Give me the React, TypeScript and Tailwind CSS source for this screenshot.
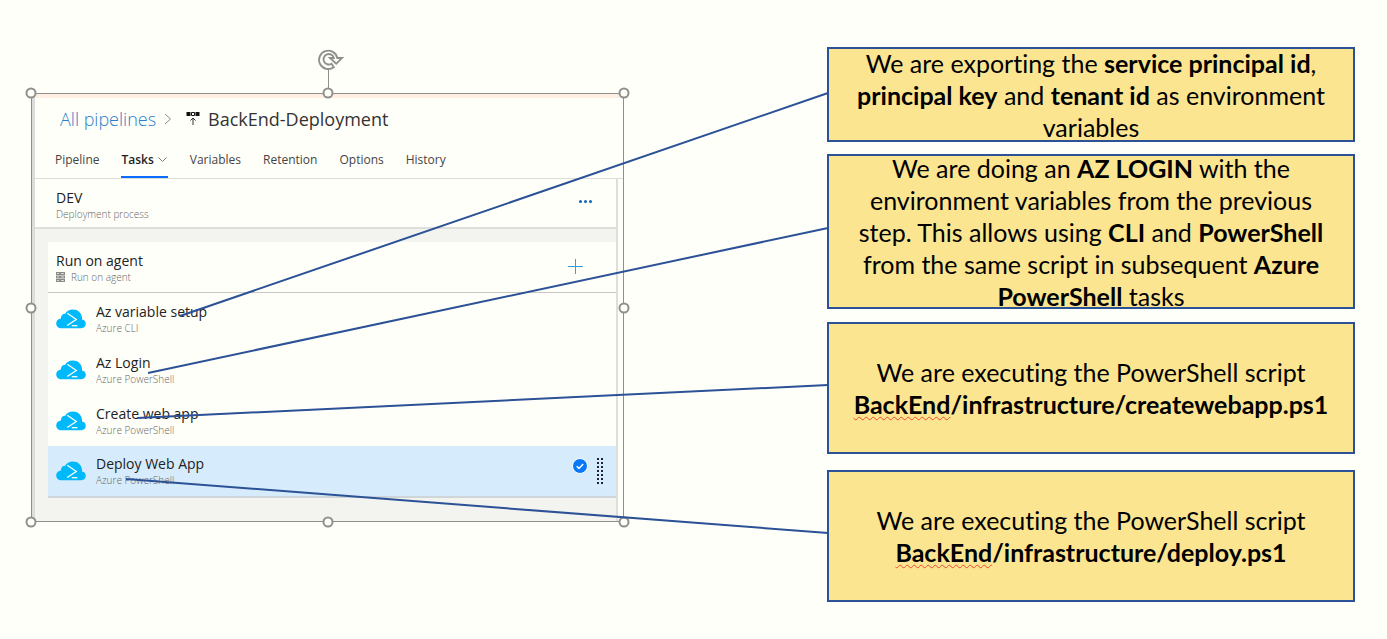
import type { ReactNode } from 'react';

const PAPER = 'bg-[#fffffa]';

function CloudShellIcon() {
  return (
    <svg viewBox="0 0 30 20" className="h-5 w-[30px] shrink-0" aria-hidden="true">
      <path
        d="M5.500 19.200C2.300 19.200.2 17 .2 14.400c0-2.600 2.100-4.600 4.700-4.900C4.900 6.500 6.500 4.800 9.200 4.700C10.300 2.300 13.300.4 16.900.4c5 0 8.600 3.300 9.100 8 .1.700.1 1.200 0 2.100 2.300.2 3.800 1.900 3.800 4.300 0 2.500-1.900 4.400-4.400 4.400z"
        fill="#00b9fb"
      />
      <path d="M11.300 4.200 20.300 10.500 11.200 16.500" fill="none" stroke="#fffffa" strokeWidth="1.300" />
      <path d="M15.800 16.700h5.600" stroke="#fffffa" strokeWidth="1.300" />
    </svg>
  );
}

function ReleaseIcon() {
  return (
    <svg viewBox="0 0 14 14" className="size-3.5 shrink-0" aria-hidden="true">
      <path d="M.5 0h4v4h-4zM9.500 0h4v4h-4z" fill="#111" />
      <path d="M5.500.5h3v3h-3z" fill="none" stroke="#111" />
      <path d="M7 13V6M4.500 8.500 7 6l2.500 2.500" fill="none" stroke="#333" />
    </svg>
  );
}

function ServerIcon() {
  return (
    <svg viewBox="0 0 9 10" className="h-2.5 w-[9px]" aria-hidden="true">
      <path d="M0 0h9v3H0zM0 3.500h9v3H0zM0 7h9v3H0z" fill="#8a8a88" />
      <path d="M1 1.500h2M5 1.500h3M1 5h2M5 5h3M1 8.500h2M5 8.500h3" stroke="#d8d8d4" />
    </svg>
  );
}

const handles = [
  'left-0 top-0',
  'left-1/2 top-0',
  'left-full top-0',
  'left-0 top-1/2',
  'left-full top-1/2',
  'left-0 top-full',
  'left-1/2 top-full',
  'left-full top-full',
];

function SelectionHandles() {
  return (
    <div className="pointer-events-none absolute -inset-px">
      <span className="absolute -top-6 left-1/2 h-6 w-px bg-[#8f8f8d]" />
      <svg
        viewBox="0 0 26 22"
        className="absolute -top-11 left-1/2 -ml-2.5 h-[22px] w-[26px]"
        fill="none"
        stroke="#8f8f8d"
        aria-hidden="true"
      >
        <path
          d="M15.800 18.200A9.200 9.200 0 1 1 19.300 9H24l-5.800 5.800L12 9h3.800A5.200 5.200 0 1 0 13.500 14.700z"
          fill="#fffffa"
          strokeWidth="1.900"
        />
      </svg>
      {handles.map((place) => (
        <span
          key={place}
          className={`absolute size-[11px] -translate-x-1/2 -translate-y-1/2 rounded-full border-2 border-[#8f8f8d] ${PAPER} ${place}`}
        />
      ))}
    </div>
  );
}

const tabs = ['Pipeline', 'Tasks', 'Variables', 'Retention', 'Options', 'History'];

const tasks = [
  { name: 'Az variable setup', kind: 'Azure CLI' },
  { name: 'Az Login', kind: 'Azure PowerShell' },
  { name: 'Create web app', kind: 'Azure PowerShell' },
  { name: 'Deploy Web App', kind: 'Azure PowerShell', selected: true },
];

function Titles({ name, children }: { name: string; children: ReactNode }) {
  return (
    <div className="flex flex-col">
      <span className="text-sm leading-[18px] text-[#222]">{name}</span>
      <span className="flex items-center gap-1.5 text-[10px] leading-[14px] font-light text-[#666]">{children}</span>
    </div>
  );
}

function PipelinePanel() {
  return (
    <section
      className={`relative flex h-[429px] flex-col border border-[#8f8f8d] font-['Open_Sans','Noto_Sans',sans-serif] ${PAPER}`}
    >
      <div className="flex grow flex-col border-l-3 border-[#dcdcda]">
        <header className="border-b border-b-[#deded9]">
          <div className="h-1 bg-[#ffeee2]" />
          <nav className="flex h-[42px] items-center pl-[25px] text-lg" aria-label="Breadcrumb">
            <a href="#pipelines" className="font-light text-[#2a7fcb]">
              All pipelines
            </a>
            <svg viewBox="0 0 8 12" className="mr-3.5 ml-2 h-3 w-2" fill="none" stroke="#888" aria-hidden="true">
              <path d="m1 1 5.500 5L1 11" />
            </svg>
            <ReleaseIcon />
            <span className="ml-2 text-[#333]">BackEnd-Deployment</span>
          </nav>
          <nav className="flex h-[38px] gap-[22px] pl-5 text-xs text-[#444]" aria-label="Sections">
            {tabs.map((tab) =>
              tab === 'Tasks' ? (
                <button
                  key={tab}
                  type="button"
                  className="flex items-center gap-1 border-b-2 border-[#0a6cff] pt-1 pr-px font-semibold text-[#222]"
                >
                  {tab}
                  <svg viewBox="0 0 9 6" className="h-1.5 w-[9px]" fill="none" stroke="#777" aria-hidden="true">
                    <path d="m.5.5 4 4 4-4" />
                  </svg>
                </button>
              ) : (
                <button key={tab} type="button" className="border-b-2 border-transparent pt-1">
                  {tab}
                </button>
              ),
            )}
          </nav>
        </header>
        <div className="mr-[5px] flex grow flex-col border-r-2 border-[#dededb] bg-[#f3f3f0]">
          <div className={`flex h-[50px] justify-between border-b-2 border-[#dededb] pt-2.5 pr-6 pl-[21px] ${PAPER}`}>
            <Titles name="DEV">Deployment process</Titles>
            <button type="button" aria-label="More" className="flex h-6 items-center gap-[2px]">
              <span className="size-[3px] rounded-full bg-[#0f62b4]" />
              <span className="size-[3px] rounded-full bg-[#0f62b4]" />
              <span className="size-[3px] rounded-full bg-[#0f62b4]" />
            </button>
          </div>
          <div className={`mt-[13px] ml-[13px] ${PAPER}`}>
            <div className="flex h-[51px] justify-between border-b border-[#c8c8c6] pt-2.5 pr-[33px] pl-2">
              <Titles name="Run on agent">
                <ServerIcon />
                Run on agent
              </Titles>
              <button type="button" aria-label="Add task" className="flex h-7 items-center">
                <svg viewBox="0 0 15 15" className="size-[15px]" aria-hidden="true">
                  <path d="M0 7.500h15M7.500 0v15" stroke="#3c9bdc" />
                </svg>
              </button>
            </div>
            <ul>
              {tasks.map((task) => (
                <li
                  key={task.name}
                  className={
                    task.selected
                      ? 'flex h-[52px] items-center border-b-2 border-[#cfd6da] bg-[#d6ebfb] pr-3 pl-2'
                      : 'flex h-[51px] items-center pr-3 pl-2'
                  }
                >
                  <CloudShellIcon />
                  <div className="ml-2.5 grow">
                    <Titles name={task.name}>{task.kind}</Titles>
                  </div>
                  {task.selected && (
                    <>
                      <svg viewBox="0 0 16 16" className="mt-3 mr-2 size-4 self-start" aria-hidden="true">
                        <circle cx="8" cy="8" r="7.500" fill="#0878f8" stroke="#fff" />
                        <path d="m4.700 8.200 2.300 2.200 4.200-4.300" fill="none" stroke="#fff" strokeWidth="1.500" />
                      </svg>
                      <svg viewBox="0 0 8 26" className="h-[26px] w-2" aria-hidden="true">
                        <path d="M2 0v26M6 0v26" stroke="#223" strokeWidth="2" strokeDasharray="2 2" />
                      </svg>
                    </>
                  )}
                </li>
              ))}
            </ul>
          </div>
        </div>
      </div>
      <SelectionHandles />
    </section>
  );
}

function Note({ size, children }: { size: string; children: ReactNode }) {
  return (
    <article
      className={`flex items-center justify-center border-2 border-[#2b5196] bg-[#fbe590] px-5 text-center text-[25px] leading-8 text-black [font-variant-ligatures:none] ${size}`}
    >
      <p className="max-w-full shrink-0">{children}</p>
    </article>
  );
}

function Misspelt({ children }: { children: ReactNode }) {
  return (
    <span className="underline decoration-[#f04a30] decoration-wavy decoration-1 underline-offset-2">{children}</span>
  );
}

export default function App() {
  return (
    <main
      className={`relative grid min-h-screen grid-cols-[593fr_203fr_528fr] items-start pr-8 pl-[31px] font-['Lato',sans-serif] ${PAPER}`}
    >
      <div className="pt-[93px]">
        <PipelinePanel />
      </div>
      <div className="col-start-3 flex flex-col pt-[47px] pb-9">
        <Note size="h-[95px]">
          We are exporting the <b>service principal id</b>, <b>principal key</b> and <b>tenant id</b> as environment
          variables
        </Note>
        <Note size="mt-3 h-[155px]">
          We are doing an <b>AZ LOGIN</b> with the environment variables from the previous step. This allows using{' '}
          <b>CLI</b> and <b>PowerShell</b> from the same script in subsequent <b>Azure PowerShell</b> tasks
        </Note>
        <Note size="mt-[13px] h-[132px]">
          We are executing the PowerShell script{' '}
          <b>
            <Misspelt>BackEnd</Misspelt>/infrastructure/createwebapp.ps1
          </b>
        </Note>
        <Note size="mt-4 h-[132px]">
          We are executing the PowerShell script{' '}
          <b>
            <Misspelt>BackEnd</Misspelt>/infrastructure/deploy.ps1
          </b>
        </Note>
      </div>
      <svg
        viewBox="0 0 1387 639"
        preserveAspectRatio="none"
        className="pointer-events-none absolute top-0 left-0 h-[639px] w-full"
        stroke="#2b5196"
        strokeWidth="2"
        aria-hidden="true"
      >
        <path vectorEffect="non-scaling-stroke" d="M180 316 828 93" />
        <path vectorEffect="non-scaling-stroke" d="M148 373 828 228" />
        <path vectorEffect="non-scaling-stroke" d="M137 418 828 385" />
        <path vectorEffect="non-scaling-stroke" d="M126 479 828 533" />
      </svg>
    </main>
  );
}
